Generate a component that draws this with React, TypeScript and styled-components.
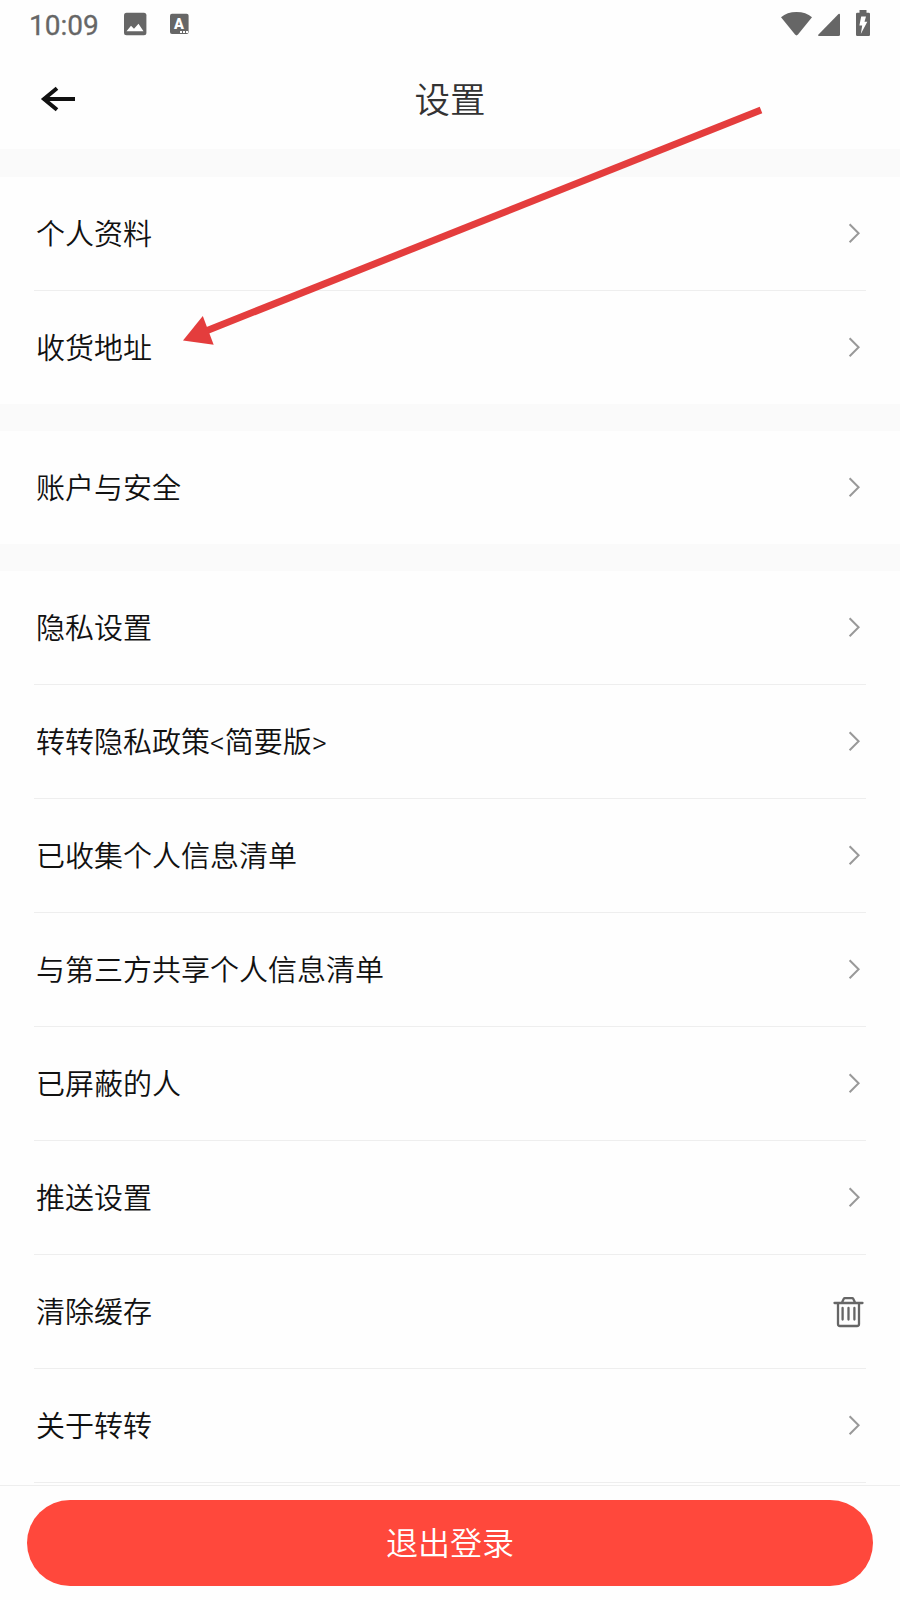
import React from "react";
import styled, { createGlobalStyle } from "styled-components";

const GlobalStyle = createGlobalStyle`
  * { box-sizing: border-box; }
  body {
    margin: 0;
    background: #fefefe;
    font-family: "Noto Sans CJK SC", sans-serif;
  }
`;

const Screen = styled.div`
  position: relative;
  display: flex;
  flex-direction: column;
  width: 900px;
  height: 1600px;
  overflow: hidden;
  background: #fefefe;
`;

const StatusBar = styled.header`
  display: flex;
  align-items: center;
  justify-content: space-between;
  height: 48px;
  padding: 0 29px 0 28px;
  color: #666;
`;

const StatusGroup = styled.div`
  display: flex;
  align-items: center;
  svg { display: block; }
`;

const Clock = styled.span`
  width: 96px;
  font: 400 28px/46px Roboto, sans-serif;
  padding: 3px 0 0 1px;
  -webkit-text-stroke: 0.3px #666;
`;

const NavBar = styled.nav`
  display: grid;
  grid-template-columns: 120px 1fr 120px;
  align-items: center;
  height: 101px;
`;

const BackButton = styled.button`
  display: flex;
  padding: 0 0 0 40px;
  border: 0;
  background: none;
`;

const Title = styled.h1`
  margin: 0;
  padding-bottom: 1px;
  text-align: center;
  font-size: 35.5px;
  line-height: 52px;
  font-weight: 350;
  color: #333;
`;

const Group = styled.section`
  flex: none;
  border-top: 27px solid #fafafa;
`;

const FirstGroup = styled(Group)`
  border-top-width: 28px;
`;

const Row = styled.div<{ $divided: boolean }>`
  display: flex;
  align-items: center;
  justify-content: space-between;
  height: ${(p) => (p.$divided ? 114 : 113)}px;
  margin: 0 34px;
  padding: 0 0 0 2px;
  border-bottom: ${(p) => (p.$divided ? "1px solid #eee" : "0")};
`;

const Label = styled.span`
  height: 44px;
  margin-top: 2px;
  font-family: Roboto, "Noto Sans CJK SC", sans-serif;
  font-weight: 350;
  font-size: 29px;
  line-height: 44px;
  color: #111;
  white-space: nowrap;
`;

const Footer = styled.footer`
  display: flex;
  flex: none;
  margin-top: 2px;
  padding: 14px 27px;
  border-top: 1px solid #eee;
`;

const LogoutButton = styled.button`
  flex: 1;
  height: 86px;
  padding: 0 0 4px;
  border: 0;
  border-radius: 43px;
  background: #ff483c;
  color: #fff;
  font: 350 32px/48px "Noto Sans CJK SC", sans-serif;
`;

const Annotation = styled.svg`
  position: absolute;
  top: 0;
  left: 0;
  pointer-events: none;
`;

const Chevron = () => (
  <svg width="31" height="24" viewBox="0 0 31 24" fill="none" stroke="#999" strokeWidth="2">
    <path d="M14.6 2.2 23.6 11.2 14.6 20.2" />
  </svg>
);

const Trash = () => (
  <svg width="34" height="34" viewBox="0 0 34 34" fill="none" stroke="#666" strokeWidth="2.3" strokeLinecap="round" strokeLinejoin="round">
    <path d="M2.5 8h28M10.2 7l1.6-3.2q.3-.6 1-.6h7.4q.7 0 1 .6L22.8 7M6 8v21q0 2 2 2h17q2 0 2-2V8M10.6 13v11.6M16.5 13v11.6M22.4 13v11.6" />
  </svg>
);

type Item = { label: string; icon?: "trash" };

const profile: Item[] = [{ label: "个人资料" }, { label: "收货地址" }];
const account: Item[] = [{ label: "账户与安全" }];
const general: Item[] = [
  { label: "隐私设置" },
  { label: "转转隐私政策<简要版>" },
  { label: "已收集个人信息清单" },
  { label: "与第三方共享个人信息清单" },
  { label: "已屏蔽的人" },
  { label: "推送设置" },
  { label: "清除缓存", icon: "trash" },
  { label: "关于转转" },
];

const Rows = ({ items, closed = false }: { items: Item[]; closed?: boolean }) => (
  <>
    {items.map((item, i) => (
      <Row key={item.label} $divided={closed || i < items.length - 1}>
        <Label>{item.label}</Label>
        {item.icon === "trash" ? <Trash /> : <Chevron />}
      </Row>
    ))}
  </>
);

export default function App() {
  return (
    <Screen>
      <GlobalStyle />
      <StatusBar>
        <StatusGroup>
          <Clock>10:09</Clock>
          <svg width="76" height="30" viewBox="0 0 76 30">
            <rect x="0" y="3.8" width="22.4" height="22.4" rx="2.5" fill="#666" />
            <path d="M2.5 22.3 7 16.8 10 19.8 14.5 14.8 19.5 22.3Z" fill="#fff" />
            <rect x="46" y="4.7" width="18.6" height="20.4" rx="2" fill="#666" />
            <text x="55" y="19.8" textAnchor="middle" fontFamily="Roboto" fontWeight="900" fontSize="14.5" fill="#fff">A</text>
            <path d="M56 23h2M59 23h2M62 23h2" stroke="#fff" strokeWidth="1.8" />
          </svg>
        </StatusGroup>
        <StatusGroup>
          <svg width="91" height="30" viewBox="780 9 91 30" fill="#666">
            <path d="M781 17.2Q787 12 796.5 12T812 17.2L798 34.6Q796.5 36.2 795 34.6Z" />
            <path d="M838.5 14Q840 13.2 840 15V34.5Q840 36 838.5 36H819Q817.4 36 818.5 34.5Z" />
            <path d="M859.5 10h7v2.8h2.3q1.2 0 1.2 1.2v20.8q0 1.2-1.2 1.2h-11.6q-1.2 0-1.2-1.2V14q0-1.2 1.2-1.2h2.3Z" />
            <path d="M861.2 16.5h4.8l-1.5 5.2h2.8L860.8 34l1.4-8.5h-2.8Z" fill="#fff" />
          </svg>
        </StatusGroup>
      </StatusBar>
      <NavBar>
        <BackButton aria-label="返回">
          <svg width="36" height="28" viewBox="0 0 36 28" fill="none" stroke="#111" strokeWidth="4">
            <path d="M35 14H4M17 3.2 4 14 17 24.8" />
          </svg>
        </BackButton>
        <Title>设置</Title>
      </NavBar>
      <FirstGroup><Rows items={profile} /></FirstGroup>
      <Group><Rows items={account} /></Group>
      <Group><Rows items={general} closed /></Group>
      <Footer>
        <LogoutButton>退出登录</LogoutButton>
      </Footer>
      <Annotation width="900" height="400" viewBox="0 0 900 400" aria-hidden="true">
        <path d="M206 331 761 110" stroke="#e43d3d" strokeWidth="7" />
        <path d="M183 340.5 202.8 316 213.7 344.7Z" fill="#e43d3d" />
      </Annotation>
    </Screen>
  );
}
